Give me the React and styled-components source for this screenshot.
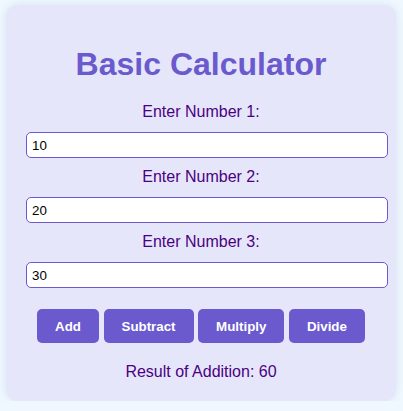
import React, { useState } from 'react'
import styled, { createGlobalStyle } from 'styled-components'

const GlobalStyle = createGlobalStyle`
  body {
    margin: 0;
    background: #f0f8ff;
    font-family: "Liberation Sans", Arial, sans-serif;
  }
`

export default function App() {
  const [nums] = useState(['10', '20', '30'])
  const total = nums.reduce((s, n) => s + Number(n), 0)

  return (
    <>
      <GlobalStyle />
      <Card>
        <Title>Basic Calculator</Title>
        {nums.map((n, i) => (
          <React.Fragment key={i}>
            <Label>Enter Number {i + 1}:</Label>
            <NumInput type="text" defaultValue={n} />
          </React.Fragment>
        ))}
        <ButtonRow>
          <OpButton>Add</OpButton>
          <OpButton>Subtract</OpButton>
          <OpButton>Multiply</OpButton>
          <OpButton>Divide</OpButton>
        </ButtonRow>
        <Result>Result of Addition: {total}</Result>
      </Card>
    </>
  )
}

const Card = styled.div`
  width: 350px;
  margin: 5px 0 0 6px;
  padding: 20px;
  background: #e6e6fa;
  border-radius: 12px;
  box-shadow: 0 0 10px rgba(70, 110, 160, 0.15);
  text-align: center;
`

const Title = styled.h1`
  margin: 21px 0 20px;
  font-size: 32px;
  line-height: 37px;
  font-weight: bold;
  color: #6a5acd;
`

const Label = styled.label`
  display: block;
  margin: 10px 0 11px;
  font-size: 16px;
  line-height: 18px;
  color: #4b0082;
`

const NumInput = styled.input`
  display: block;
  width: 100%;
  height: 14px;
  padding: 5px;
  margin: 0;
  border: 1px solid #6a5acd;
  border-radius: 5px;
  background: #fff;
  font-family: "Liberation Sans", Arial, sans-serif;
  font-size: 13.33px;
  color: #000;
  text-align: left;
  outline: none;
`

const ButtonRow = styled.div`
  display: flex;
  justify-content: center;
  gap: 4.5px;
  margin-top: 21px;
`

const OpButton = styled.button`
  height: 34px;
  padding: 0 18px;
  border: none;
  border-radius: 5px;
  background: #6a5acd;
  color: #fff;
  font-family: "Liberation Sans", Arial, sans-serif;
  font-size: 13.33px;
  font-weight: bold;
  cursor: pointer;
`

const Result = styled.p`
  margin: 20px 0 0;
  font-size: 16px;
  line-height: 18px;
  color: #4b0082;
`
